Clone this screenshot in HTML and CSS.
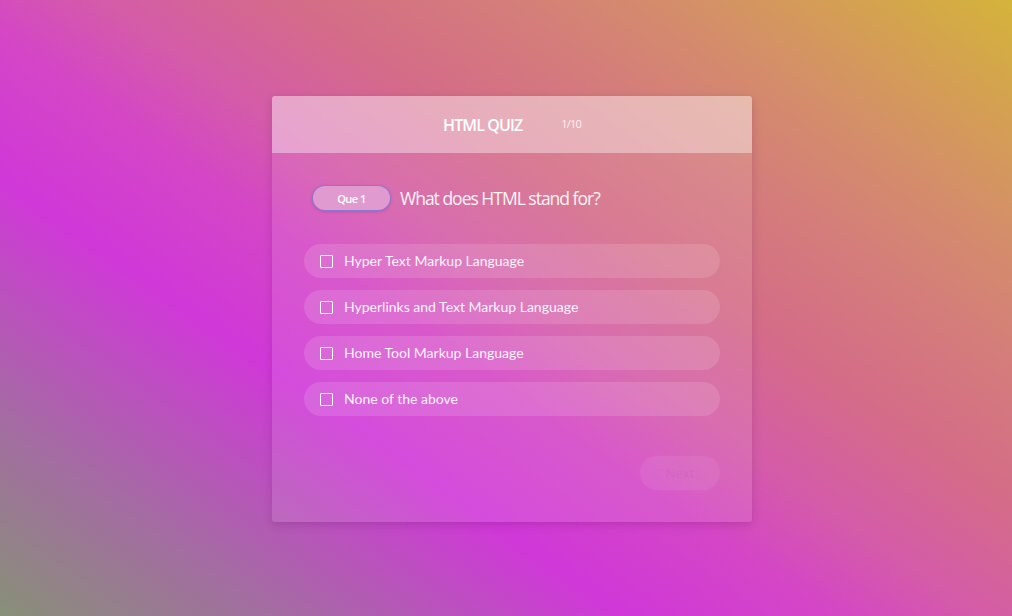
FILE: index.html
```html
<!DOCTYPE html>
<html lang="en">
<head>
<meta charset="utf-8">
<title>HTML Quiz</title>
<link rel="stylesheet" href="styles.css">
</head>
<body>
<div class="quiz">
  <header class="quiz-head">
    <span class="quiz-title">HTML QUIZ</span>
    <span class="quiz-count">1/10</span>
  </header>
  <section class="quiz-body">
    <div class="question">
      <span class="que-tag">Que 1</span>
      <span class="que-text">What does HTML stand for?</span>
    </div>
    <ul class="options">
      <li class="option"><span class="box"></span><span class="opt-text">Hyper Text Markup Language</span></li>
      <li class="option"><span class="box"></span><span class="opt-text">Hyperlinks and Text Markup Language</span></li>
      <li class="option"><span class="box"></span><span class="opt-text">Home Tool Markup Language</span></li>
      <li class="option"><span class="box"></span><span class="opt-text">None of the above</span></li>
    </ul>
    <div class="actions">
      <button class="next">Next</button>
    </div>
  </section>
</div>
</body>
</html>
```

FILE: styles.css
```css
* { box-sizing: border-box; }
html, body { margin: 0; height: 616px; }
body {
  display: flex;
  align-items: center;
  justify-content: center;
  padding: 2px 0 0 12px;
  background: linear-gradient(35deg, #889078 0%, #a46ca2 15%, #d038d8 33%, #d446c6 44%, #d45ca8 52%, #d46c88 62%, #d47c7c 72%, #d48e6a 82%, #d4a250 92%, #d4b43a 100%);
  font-family: "Open Sans", "DejaVu Sans", sans-serif;
  color: #fff;
}
.quiz {
  width: 480px;
  height: 426px;
  background: rgba(255, 255, 255, 0.1);
  border-radius: 3px;
  box-shadow: 0 3px 8px rgba(90, 20, 90, 0.22);
  display: flex;
  flex-direction: column;
}
.quiz-head {
  height: 57px;
  flex: none;
  display: flex;
  align-items: center;
  justify-content: center;
  gap: 39px;
  background: rgba(255, 255, 255, 0.38);
  border-radius: 3px 3px 0 0;
}
.quiz-title {
  font-size: 16px;
  font-weight: 600;
  letter-spacing: -0.9px;
}
.quiz-count {
  font-size: 11px;
  color: rgba(255, 255, 255, 0.85);
  letter-spacing: -0.8px;
  padding-bottom: 2px;
}
.quiz-body {
  flex: 1;
  padding: 32px 32px 32px;
  display: flex;
  flex-direction: column;
}
.question {
  display: flex;
  align-items: center;
  padding-left: 8px;
  margin-bottom: 33px;
}
.que-tag {
  width: 79px;
  height: 26px;
  border-radius: 13px;
  background: #e09ad0;
  border: 1px solid rgba(110, 110, 210, 0.75);
  box-shadow: 0 1px 3px rgba(120, 40, 120, 0.25);
  display: flex;
  align-items: center;
  justify-content: center;
  font-size: 11px;
  font-weight: 600;
  letter-spacing: -0.5px;
}
.que-text {
  margin-left: 9px;
  font-size: 17.5px;
  letter-spacing: -1px;
  color: #fff4f4;
}
.options {
  list-style: none;
  margin: 0;
  padding: 0;
  display: flex;
  flex-direction: column;
  gap: 12px;
}
.option {
  height: 34px;
  border-radius: 17px;
  background: rgba(255, 255, 255, 0.13);
  display: flex;
  align-items: center;
  padding-left: 16px;
}
.box {
  width: 13px;
  height: 13px;
  border: 1.5px solid #fff;
  border-radius: 1px;
  flex: none;
}
.opt-text {
  margin-left: 11px;
  font-family: "Lato", "Open Sans", sans-serif;
  font-size: 14px;
  color: #fff4fa;
  padding-bottom: 2px;
}
.actions {
  margin-top: 40px;
  display: flex;
  justify-content: flex-end;
}
.next {
  width: 80px;
  height: 34px;
  border: none;
  border-radius: 17px;
  background: rgba(255, 255, 255, 0.07);
  box-shadow: 0 0 6px rgba(255, 255, 255, 0.04);
  font-family: "Open Sans", sans-serif;
  font-size: 13px;
  color: rgba(200, 90, 170, 0.35);
}
```
